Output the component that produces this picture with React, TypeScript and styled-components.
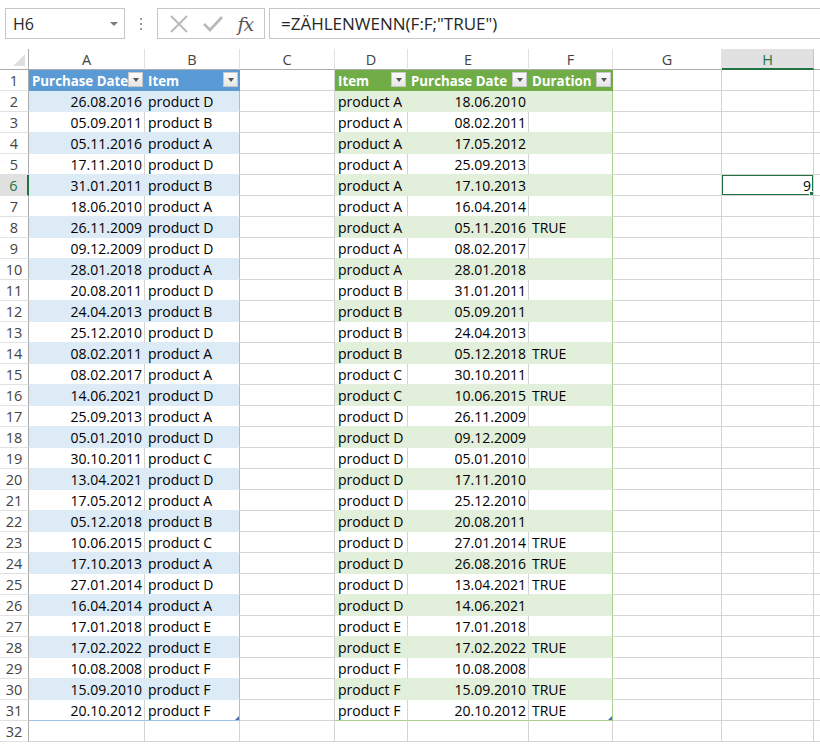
import React from "react";
import styled, { createGlobalStyle } from "styled-components";

const Global = createGlobalStyle`
  html, body { margin: 0; padding: 0; background: #ffffff; overflow: hidden; }
  body { font-family: "Open Sans", "Liberation Sans", sans-serif; }
  * { box-sizing: border-box; }
`;

const Page = styled.div`
  width: 820px;
  height: 745px;
  overflow: hidden;
  background: #fff;
`;

const FormulaBar = styled.div`
  height: 49px;
  display: flex;
  align-items: flex-start;
  padding-top: 8px;
  padding-left: 5px;
`;

const NameBox = styled.div`
  width: 120px;
  height: 31px;
  border: 1px solid #c6c6c6;
  display: flex;
  align-items: center;
  justify-content: space-between;
  padding: 0 6px 0 7px;
  font-family: "Open Sans", sans-serif;
  font-size: 16px;
  color: #262626;
`;

const DropArrow = styled.span`
  width: 0;
  height: 0;
  border-left: 4px solid transparent;
  border-right: 4px solid transparent;
  border-top: 4px solid #7a7a7a;
`;

const Grip = styled.div`
  width: 32px;
  height: 31px;
  display: flex;
  flex-direction: column;
  align-items: center;
  justify-content: center;
  gap: 3px;
`;

const GripDot = styled.span`
  width: 2px;
  height: 2px;
  background: #9a9a9a;
`;

const FxBox = styled.div`
  width: 108px;
  height: 31px;
  border: 1px solid #c6c6c6;
  display: flex;
  align-items: center;
  justify-content: space-around;
  padding: 0 4px;
`;

const FxText = styled.span`
  font-family: "DejaVu Serif", "Liberation Serif", serif;
  font-style: italic;
  font-size: 19px;
  color: #555;
  letter-spacing: -1px;
`;

const FormulaInput = styled.div`
  flex: 1;
  margin-left: 4px;
  height: 31px;
  border-top: 1px solid #c6c6c6;
  border-bottom: 1px solid #c6c6c6;
  border-left: 1px solid #c6c6c6;
  display: flex;
  align-items: center;
  padding-left: 11px;
  font-family: "Open Sans", sans-serif;
  font-size: 17px;
  color: #262626;
`;

const Sheet = styled.div`
  display: grid;
  grid-template-columns: 29px 116px 95px 95px 73px 121px 84px 109px 92px 40px;
  grid-auto-rows: 21px;
`;

const Corner = styled.div`
  position: relative;
  background: #fff;
  border-right: 1px solid #ababab;
  border-bottom: 1px solid #ababab;
  &::after {
    content: "";
    position: absolute;
    right: 3px;
    bottom: 3px;
    width: 0;
    height: 0;
    border-left: 12px solid transparent;
    border-bottom: 12px solid #dfdfdf;
  }
`;

const ColHead = styled.div<{ $active?: boolean }>`
  display: flex;
  align-items: center;
  justify-content: center;
  font-family: "Open Sans", sans-serif;
  font-size: 14.5px;
  color: ${(p) => (p.$active ? "#217346" : "#444")};
  background: ${(p) => (p.$active ? "#e1e1e1" : "#fff")};
  border-right: 1px solid ${(p) => (p.$active ? "#c6c6c6" : "#e1e1e1")};
  border-bottom: ${(p) => (p.$active ? "2px solid #217346" : "1px solid #ababab")};
  padding-top: ${(p) => (p.$active ? "1px" : "0")};
`;

const RowHead = styled.div<{ $active?: boolean }>`
  display: flex;
  align-items: center;
  justify-content: center;
  font-family: "Open Sans", sans-serif;
  font-size: 14.5px;
  color: ${(p) => (p.$active ? "#217346" : "#444")};
  background: ${(p) => (p.$active ? "#e1e1e1" : "#fff")};
  border-right: ${(p) => (p.$active ? "2px solid #217346" : "1px solid #ababab")};
  border-bottom: 1px solid #e1e1e1;
`;

const Cell = styled.div<{
  $fill: string;
  $lineR: string;
  $lineB: string;
  $align: "left" | "right";
  $head?: boolean;
}>`
  position: relative;
  display: flex;
  align-items: center;
  justify-content: ${(p) => (p.$align === "right" ? "flex-end" : "flex-start")};
  padding: 1px 2px 0 3px;
  overflow: hidden;
  white-space: nowrap;
  background: ${(p) => p.$fill};
  border-right: 1px solid ${(p) => p.$lineR};
  border-bottom: 1px solid ${(p) => p.$lineB};
  font-family: "Open Sans", "Liberation Sans", sans-serif;
  font-size: ${(p) => (p.$head ? "13.3px" : "14px")};
  font-weight: ${(p) => (p.$head ? 700 : 400)};
  color: ${(p) => (p.$head ? "#ffffff" : "#000000")};
`;

const HeadLabel = styled.span`
  white-space: nowrap;
`;

const FilterButton = styled.span`
  position: absolute;
  right: 1px;
  top: 2px;
  width: 15px;
  height: 15px;
  background: linear-gradient(#fbfbfb, #e6e6e6);
  border: 1px solid #c8c8c8;
  display: flex;
  align-items: center;
  justify-content: center;
  &::after {
    content: "";
    width: 0;
    height: 0;
    border-left: 3.5px solid transparent;
    border-right: 3.5px solid transparent;
    border-top: 4px solid #555;
  }
`;

const Selection = styled.div`
  position: absolute;
  left: -1px;
  top: -1px;
  right: -1px;
  bottom: -1px;
  border: 2px solid #217346;
  pointer-events: none;
`;

const FillHandle = styled.div`
  position: absolute;
  right: -4px;
  bottom: -4px;
  width: 7px;
  height: 7px;
  background: #217346;
  border: 1px solid #fff;
`;

const ResizeMark = styled.div`
  position: absolute;
  right: 0;
  bottom: 0;
  width: 0;
  height: 0;
  border-left: 4px solid transparent;
  border-bottom: 4px solid #4a6ea9;
`;

const tableA: [string, string][] = [
  ["26.08.2016", "product D"],
  ["05.09.2011", "product B"],
  ["05.11.2016", "product A"],
  ["17.11.2010", "product D"],
  ["31.01.2011", "product B"],
  ["18.06.2010", "product A"],
  ["26.11.2009", "product D"],
  ["09.12.2009", "product D"],
  ["28.01.2018", "product A"],
  ["20.08.2011", "product D"],
  ["24.04.2013", "product B"],
  ["25.12.2010", "product D"],
  ["08.02.2011", "product A"],
  ["08.02.2017", "product A"],
  ["14.06.2021", "product D"],
  ["25.09.2013", "product A"],
  ["05.01.2010", "product D"],
  ["30.10.2011", "product C"],
  ["13.04.2021", "product D"],
  ["17.05.2012", "product A"],
  ["05.12.2018", "product B"],
  ["10.06.2015", "product C"],
  ["17.10.2013", "product A"],
  ["27.01.2014", "product D"],
  ["16.04.2014", "product A"],
  ["17.01.2018", "product E"],
  ["17.02.2022", "product E"],
  ["10.08.2008", "product F"],
  ["15.09.2010", "product F"],
  ["20.10.2012", "product F"],
];

const tableB: [string, string, string][] = [
  ["product A", "18.06.2010", ""],
  ["product A", "08.02.2011", ""],
  ["product A", "17.05.2012", ""],
  ["product A", "25.09.2013", ""],
  ["product A", "17.10.2013", ""],
  ["product A", "16.04.2014", ""],
  ["product A", "05.11.2016", "TRUE"],
  ["product A", "08.02.2017", ""],
  ["product A", "28.01.2018", ""],
  ["product B", "31.01.2011", ""],
  ["product B", "05.09.2011", ""],
  ["product B", "24.04.2013", ""],
  ["product B", "05.12.2018", "TRUE"],
  ["product C", "30.10.2011", ""],
  ["product C", "10.06.2015", "TRUE"],
  ["product D", "26.11.2009", ""],
  ["product D", "09.12.2009", ""],
  ["product D", "05.01.2010", ""],
  ["product D", "17.11.2010", ""],
  ["product D", "25.12.2010", ""],
  ["product D", "20.08.2011", ""],
  ["product D", "27.01.2014", "TRUE"],
  ["product D", "26.08.2016", "TRUE"],
  ["product D", "13.04.2021", "TRUE"],
  ["product D", "14.06.2021", ""],
  ["product E", "17.01.2018", ""],
  ["product E", "17.02.2022", "TRUE"],
  ["product F", "10.08.2008", ""],
  ["product F", "15.09.2010", "TRUE"],
  ["product F", "20.10.2012", "TRUE"],
];

const COLS = ["A", "B", "C", "D", "E", "F", "G", "H", ""];
const GRID = "#d4d4d4";

type Theme = { head: string; band: string; edge: string };
const BLUE: Theme = { head: "#5b9bd5", band: "#ddebf7", edge: "#9bc2e6" };
const GREEN: Theme = { head: "#70ad47", band: "#e2efda", edge: "#a9d08e" };

type CellInfo = {
  fill: string;
  lineR: string;
  lineB: string;
  align: "left" | "right";
  head?: boolean;
  text: string;
  filter?: boolean;
  resize?: boolean;
  selected?: boolean;
};

function tableCell(
  theme: Theme,
  r: number,
  isLast: boolean,
  text: string,
  align: "left" | "right"
): CellInfo {
  if (r === 1) {
    return {
      fill: theme.head,
      lineR: theme.head,
      lineB: theme.head,
      align: "left",
      head: true,
      text,
      filter: true,
    };
  }
  const banded = r % 2 === 0;
  const bottomRow = r === 31;
  return {
    fill: banded ? theme.band : "#ffffff",
    lineR: isLast ? theme.edge : banded ? theme.band : GRID,
    lineB: bottomRow ? theme.edge : theme.band,
    align,
    text,
    resize: bottomRow && isLast,
  };
}

function cellAt(r: number, c: number): CellInfo {
  const plain: CellInfo = { fill: "#fff", lineR: GRID, lineB: GRID, align: "left", text: "" };
  if (r <= 31) {
    if (c === 0 || c === 1) {
      const text =
        r === 1 ? (c === 0 ? "Purchase Date" : "Item") : tableA[r - 2][c];
      return tableCell(BLUE, r, c === 1, text, c === 0 ? "right" : "left");
    }
    if (c >= 3 && c <= 5) {
      const k = c - 3;
      const heads = ["Item", "Purchase Date", "Duration"];
      const text = r === 1 ? heads[k] : tableB[r - 2][k];
      return tableCell(GREEN, r, c === 5, text, k === 1 ? "right" : "left");
    }
  }
  if (r === 6 && c === 7) {
    return { ...plain, align: "right", text: "9", selected: true };
  }
  return plain;
}

const ROWS = Array.from({ length: 32 }, (_, i) => i + 1);

export default function App() {
  return (
    <Page>
      <Global />
      <FormulaBar>
        <NameBox>
          <span>H6</span>
          <DropArrow />
        </NameBox>
        <Grip>
          <GripDot />
          <GripDot />
          <GripDot />
        </Grip>
        <FxBox>
          <svg width="20" height="20" viewBox="0 0 20 20">
            <path d="M2 2 L18 18 M18 2 L2 18" stroke="#b8b8b8" strokeWidth="1.8" fill="none" />
          </svg>
          <svg width="22" height="18" viewBox="0 0 22 18">
            <path d="M2 9 L8 15 L20 2" stroke="#b8b8b8" strokeWidth="2.6" fill="none" />
          </svg>
          <FxText>fx</FxText>
        </FxBox>
        <FormulaInput>=ZÄHLENWENN(F:F;"TRUE")</FormulaInput>
      </FormulaBar>
      <Sheet>
        <Corner />
        {COLS.map((l, i) => (
          <ColHead key={i} $active={l === "H"}>
            {l}
          </ColHead>
        ))}
        {ROWS.map((r) => (
          <React.Fragment key={r}>
            <RowHead $active={r === 6}>{r}</RowHead>
            {COLS.map((_, c) => {
              const info = cellAt(r, c);
              return (
                <Cell
                  key={c}
                  $fill={info.fill}
                  $lineR={info.lineR}
                  $lineB={info.lineB}
                  $align={info.align}
                  $head={info.head}
                >
                  {info.filter ? (
                    <>
                      <HeadLabel>{info.text}</HeadLabel>
                      <FilterButton />
                    </>
                  ) : (
                    info.text
                  )}
                  {info.resize && <ResizeMark />}
                  {info.selected && (
                    <Selection>
                      <FillHandle />
                    </Selection>
                  )}
                </Cell>
              );
            })}
          </React.Fragment>
        ))}
      </Sheet>
    </Page>
  );
}
